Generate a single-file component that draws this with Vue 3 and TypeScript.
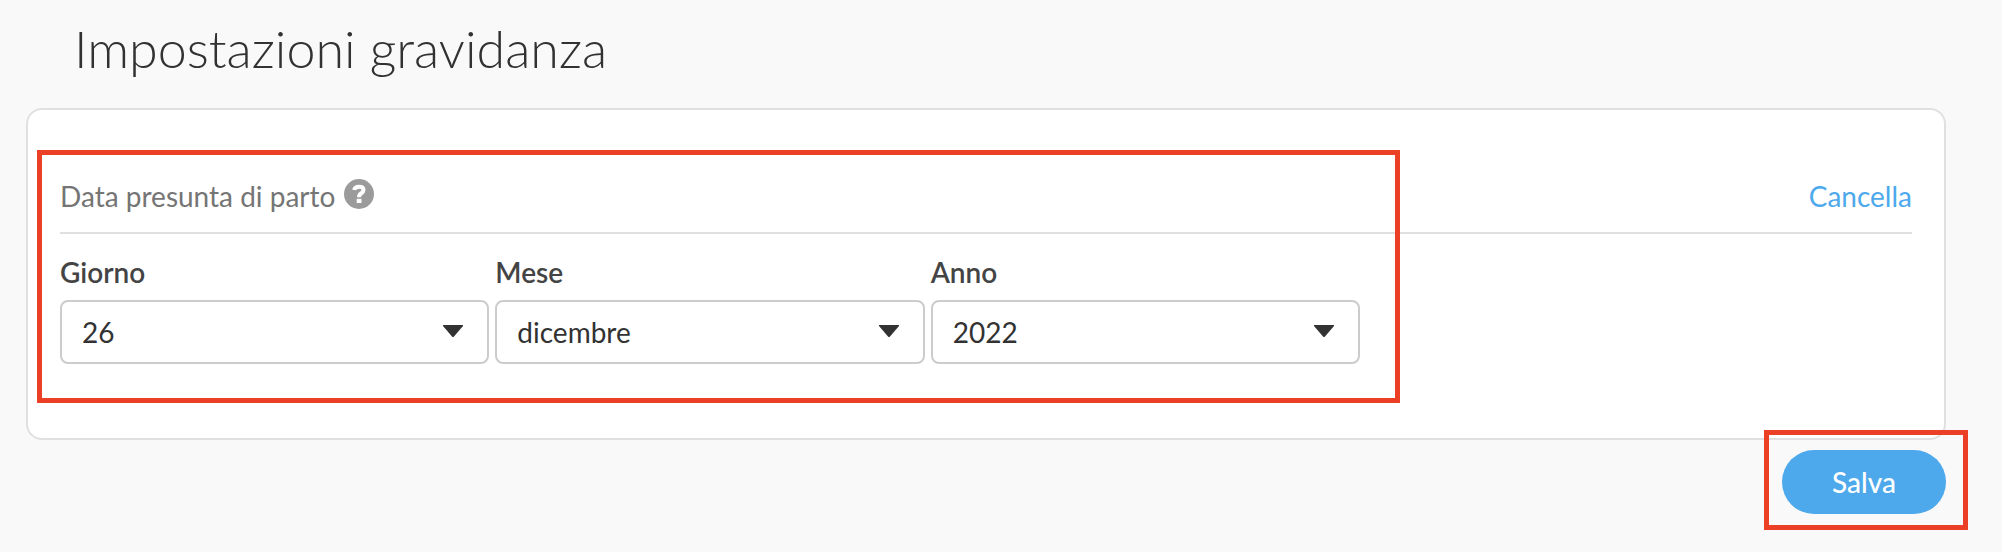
<script setup lang="ts">
import { ref } from 'vue'

interface Field {
  id: string
  label: string
  value: string
  options: string[]
}

const days = Array.from({ length: 31 }, (_, i) => String(i + 1))
const months = [
  'gennaio', 'febbraio', 'marzo', 'aprile', 'maggio', 'giugno',
  'luglio', 'agosto', 'settembre', 'ottobre', 'novembre', 'dicembre',
]

const fields = ref<Field[]>([
  { id: 'day', label: 'Giorno', value: '26', options: days },
  { id: 'month', label: 'Mese', value: 'dicembre', options: months },
  { id: 'year', label: 'Anno', value: '2022', options: ['2021', '2022', '2023'] },
])
</script>

<template>
  <main class="page">
    <h1 class="title">Impostazioni gravidanza</h1>

    <form @submit.prevent>
      <section class="card">
        <header class="card-header">
          <h2 class="card-title">Data presunta di parto</h2>
          <button class="help" type="button" aria-label="Aiuto">
            <svg viewBox="0 0 30 30" width="30" height="30" aria-hidden="true">
              <circle cx="15" cy="15" r="15" fill="#9b9b9b" />
              <path
                d="M10.2 11C10.6 8.8 12.4 7.7 15 7.7C17.8 7.7 19.5 9 19.5 11.1C19.5 12.7 18.7 13.4 17.3 14.3C15.7 15.3 15 16 15 18.2"
                fill="none" stroke="#fff" stroke-width="4"
              />
              <rect x="12.7" y="19.8" width="4.8" height="4.2" fill="#fff" />
            </svg>
          </button>
          <a class="cancel" href="#">Cancella</a>
        </header>

        <div class="fields">
          <div v-for="field in fields" :key="field.id" class="field">
            <label class="label" :for="field.id">{{ field.label }}</label>
            <div class="control">
              <select :id="field.id" v-model="field.value" class="select">
                <option v-for="option in field.options" :key="option" :value="option">{{ option }}</option>
              </select>
              <svg class="arrow" viewBox="0 0 20 12" width="20" height="12" aria-hidden="true">
                <path d="M0 0H20V1L11 11.4Q10 12.4 9 11.4L0 1Z" fill="#323232" />
              </svg>
            </div>
          </div>
          <div class="highlight fields-highlight"></div>
        </div>
      </section>

      <div class="actions">
        <div class="save-wrap">
          <button class="save" type="submit">Salva</button>
          <div class="highlight save-highlight"></div>
        </div>
      </div>
    </form>
  </main>
</template>

<style>
body {
  margin: 0;
  background: #f9f9f9;
}
</style>

<style scoped>
.page,
.page * {
  box-sizing: border-box;
}

.page {
  padding: 18px 56px 36px 26px;
  color: #323232;
  font-family: Lato, "Liberation Sans", sans-serif;
  font-size: 28px;
  line-height: 36px;
}

.title {
  margin: 0 0 30px;
  padding-left: 48px;
  font-size: 52px;
  font-weight: 300;
  line-height: 60px;
}

.card {
  padding: 68px 32px 74px;
  border: 2px solid #e0e0e0;
  border-radius: 16px;
  background: #fff;
}

.card-header {
  display: flex;
  align-items: center;
  padding-bottom: 18px;
  border-bottom: 2px solid #e0e0e0;
}

.card-title {
  margin: 0;
  color: #757575;
  font-size: 28px;
  font-weight: 400;
}

.help {
  display: flex;
  margin: 0 0 4px 9px;
  padding: 0;
  border: 0;
  border-radius: 50%;
  background: none;
  cursor: pointer;
}

.cancel {
  margin-left: auto;
  color: #4da9ec;
  text-decoration: none;
}

.fields {
  position: relative;
  display: grid;
  grid-template-columns: repeat(3, 1fr);
  gap: 6px;
  max-width: 1300px;
  padding-top: 20px;
}

.label {
  display: block;
  margin-bottom: 10px;
  color: #444;
  font-weight: 600;
}

.control {
  position: relative;
}

.select {
  display: block;
  width: 100%;
  height: 64px;
  padding: 0 60px 0 20px;
  border: 2px solid #ccc;
  border-radius: 8px;
  appearance: none;
  background: #fff;
  color: #323232;
  font: inherit;
}

.arrow {
  position: absolute;
  top: 25px;
  right: 26px;
  pointer-events: none;
}

.actions {
  display: flex;
  justify-content: flex-end;
  margin-top: 10px;
}

.save-wrap {
  position: relative;
}

.save {
  display: block;
  height: 64px;
  min-width: 164px;
  padding: 0 48px;
  border: 0;
  border-radius: 32px;
  background: #4da9ec;
  color: #fff;
  font: inherit;
  font-weight: 500;
  cursor: pointer;
}

.highlight {
  position: absolute;
  border: 5px solid #eb4025;
  pointer-events: none;
}

.fields-highlight {
  inset: -84px -40px -39px -23px;
}

.save-highlight {
  inset: -20px -22px -16px -18px;
}
</style>
